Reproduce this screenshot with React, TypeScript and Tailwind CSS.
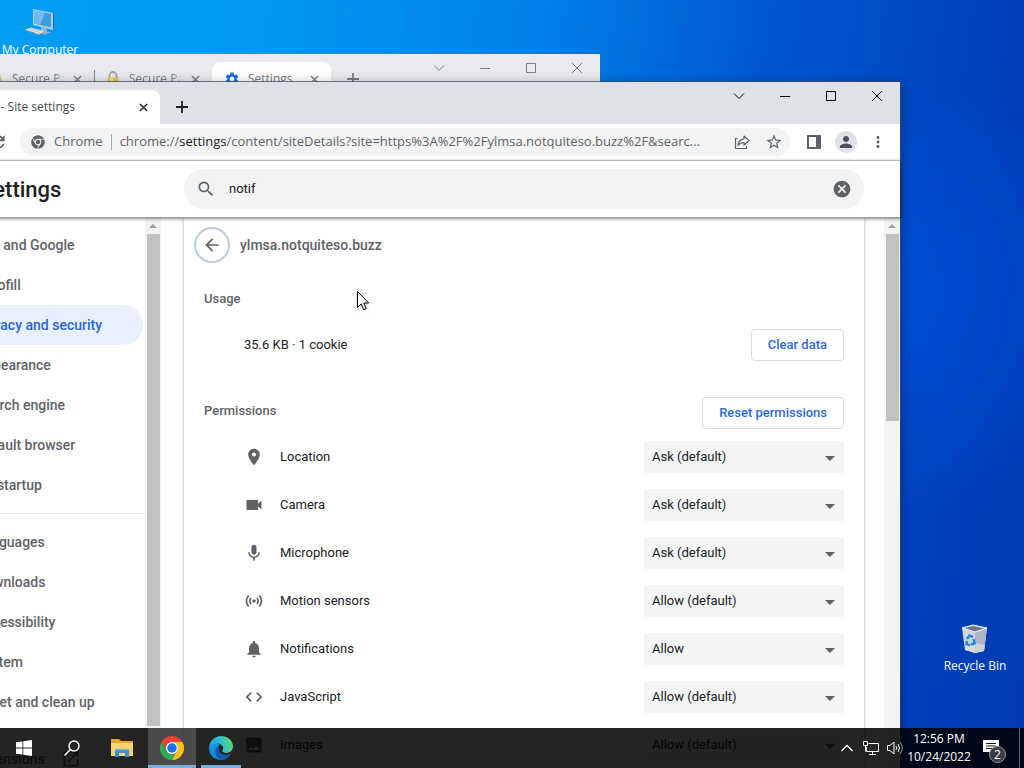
import { useState } from "react";
import {
  MdArrowBack,
  MdArrowDropDown,
  MdArrowForward,
  MdCancel,
  MdCode,
  MdImage,
  MdLocationOn,
  MdMic,
  MdMoreVert,
  MdNotifications,
  MdOpenInNew,
  MdPerson,
  MdRefresh,
  MdSearch,
  MdSensors,
  MdSettings,
  MdStarBorder,
  MdVideocam,
} from "react-icons/md";
import { FaChrome } from "react-icons/fa";

const menuTop = [
  "You and Google",
  "Autofill",
  "Privacy and security",
  "Appearance",
  "Search engine",
  "Default browser",
  "On startup",
];

const menuAdvanced = [
  "Languages",
  "Downloads",
  "Accessibility",
  "System",
  "Reset and clean up",
];

const permissions = [
  { name: "Location", icon: MdLocationOn, value: "Ask (default)" },
  { name: "Camera", icon: MdVideocam, value: "Ask (default)" },
  { name: "Microphone", icon: MdMic, value: "Ask (default)" },
  { name: "Motion sensors", icon: MdSensors, value: "Allow (default)" },
  { name: "Notifications", icon: MdNotifications, value: "Allow" },
  { name: "JavaScript", icon: MdCode, value: "Allow (default)" },
  { name: "Images", icon: MdImage, value: "Allow (default)" },
];

function CloseIcon() {
  return (
    <svg viewBox="0 0 10 10" className="size-[9px] shrink-0" fill="none" stroke="currentColor" strokeWidth="1.6">
      <path d="M1 1l8 8M9 1L1 9" />
    </svg>
  );
}

function PlusIcon() {
  return (
    <svg viewBox="0 0 12 12" className="size-3" fill="none" stroke="currentColor" strokeWidth="1.8">
      <path d="M6 0v12M0 6h12" />
    </svg>
  );
}

function LockIcon() {
  return (
    <svg viewBox="0 0 16 16" className="size-4 shrink-0">
      <path d="M4.500 9V5a3.500 4 0 0 1 7 0v4" fill="none" stroke="#aaa79c" strokeWidth="1.800" />
      <rect x="2.500" y="6.500" width="11" height="9" rx="2" fill="#e2c650" />
      <path d="M5 7h3v8H5z" fill="#f6e59a" />
    </svg>
  );
}

function WindowControls() {
  return (
    <div className="ml-auto flex h-7">
      <button aria-label="Search tabs" className="grid w-[46px] place-items-center">
        <svg viewBox="0 0 12 12" className="size-3" fill="none" stroke="currentColor">
          <path d="M1 3.500l5 5 5-5" />
        </svg>
      </button>
      <button aria-label="Minimize" className="grid w-[46px] place-items-center">
        <svg viewBox="0 0 10 10" className="size-[10px]" stroke="currentColor">
          <path d="M0 5.500h10" />
        </svg>
      </button>
      <button aria-label="Maximize" className="grid w-[46px] place-items-center">
        <svg viewBox="0 0 10 10" className="size-[10px]" fill="none" stroke="currentColor">
          <path d="M.5.5h9v9h-9z" />
        </svg>
      </button>
      <button aria-label="Close" className="grid w-[46px] place-items-center">
        <svg viewBox="0 0 12 12" className="size-3" fill="none" stroke="currentColor">
          <path d="M1 1l10 10M11 1L1 11" />
        </svg>
      </button>
    </div>
  );
}

function BackWindow() {
  return (
    <div className="absolute top-[54px] right-[424px] -left-6 h-96 bg-[#e8eaed] font-['Open_Sans',sans-serif] text-xs text-[#7a7d81]">
      <div className="flex h-[42px]">
        <div className="mt-2 flex h-[34px] w-[118px] items-center gap-2 px-3">
          <LockIcon />
          <span className="w-[54px] overflow-hidden whitespace-nowrap [mask-image:linear-gradient(to_right,black_80%,transparent)]">
            Secure Page
          </span>
          <button aria-label="Close tab" className="ml-auto">
            <CloseIcon />
          </button>
        </div>
        <div className="mt-4 h-5 w-px bg-[#85888c]" />
        <div className="mt-2 flex h-[34px] w-[117px] items-center gap-2 pr-3 pl-[10px]">
          <LockIcon />
          <span className="w-[54px] overflow-hidden whitespace-nowrap [mask-image:linear-gradient(to_right,black_80%,transparent)]">
            Secure Page
          </span>
          <button aria-label="Close tab" className="ml-auto">
            <CloseIcon />
          </button>
        </div>
        <div className="mt-2 flex h-[34px] w-[119px] items-center gap-2 rounded-t-lg bg-white px-3">
          <MdSettings className="size-4 text-[#1a6be0]" />
          <span>Settings</span>
          <button aria-label="Close tab" className="ml-auto">
            <CloseIcon />
          </button>
        </div>
        <button aria-label="New tab" className="mt-2 ml-4 h-[34px]">
          <PlusIcon />
        </button>
        <WindowControls />
      </div>
    </div>
  );
}

function Toolbar() {
  return (
    <div className="flex h-[37px] shrink-0 items-center border-b border-[#dcdee1] bg-white pr-[6px] pl-2 text-[#5f6368]">
      <button aria-label="Back" className="grid size-7 place-items-center">
        <MdArrowBack className="size-[18px]" />
      </button>
      <button aria-label="Forward" className="grid size-7 place-items-center">
        <MdArrowForward className="size-[18px]" />
      </button>
      <button aria-label="Reload" className="grid size-7 place-items-center">
        <MdRefresh className="size-5" />
      </button>
      <div className="ml-2 flex h-7 min-w-0 flex-1 items-center rounded-full bg-[#f1f3f4] pl-[11px] font-['Open_Sans',sans-serif] text-[13px]">
        <FaChrome className="size-[14px] shrink-0" />
        <span className="ml-[9px]">Chrome</span>
        <span className="mx-2 h-4 w-px bg-[#a5a8ac]" />
        <span className="min-w-0 flex-1 truncate">
          chrome://<span className="text-[#202124]">settings</span>
          /content/siteDetails?site=https%3A%2F%2Fylmsa.notquiteso.buzz%2F&searc...
        </span>
        <button aria-label="Share" className="ml-2 grid size-8 place-items-center">
          <svg viewBox="0 0 16 16" className="size-4" fill="none" stroke="currentColor" strokeWidth="1.200">
            <path d="M3.500 4.500H1.500v10h11V12" />
            <path d="M10 2l5 4.500-5 4.500V8.500c-3 0-4.500.8-6 3 .3-3.800 2.500-6.200 6-6.700z" strokeLinejoin="round" />
          </svg>
        </button>
        <button aria-label="Bookmark" className="grid size-8 place-items-center">
          <MdStarBorder className="size-[18px]" />
        </button>
      </div>
      <button aria-label="Side panel" className="ml-2 grid size-8 place-items-center">
        <svg viewBox="0 0 14 14" className="size-[14px]">
          <path d="M0 0h14v14H0zM2 2v10h7V2z" fill="currentColor" fillRule="evenodd" />
        </svg>
      </button>
      <button aria-label="Profile" className="grid size-8 place-items-center">
        <span className="grid size-[22px] place-items-center rounded-full bg-[#dee1e6]">
          <MdPerson className="size-[18px] text-[#4a4f5c]" />
        </span>
      </button>
      <button aria-label="Menu" className="grid size-8 place-items-center">
        <MdMoreVert className="size-[18px]" />
      </button>
    </div>
  );
}

function Scrollbar({ thumb }: { thumb: string }) {
  return (
    <div className="flex w-4 shrink-0 flex-col items-center bg-[#f3f3f3]">
      <svg viewBox="0 0 8 4" className="mt-[7px] mb-[6px] h-1 w-2 shrink-0">
        <path d="M4 0l4 4H0z" fill="#a0a0a0" />
      </svg>
      <div className={`w-[13px] bg-[#c1c1c1] ${thumb}`} />
    </div>
  );
}

function Sidebar() {
  return (
    <div className="flex w-[241px] shrink-0">
      <nav className="min-w-0 flex-1 pt-2 text-sm font-medium text-[#5f6368]">
        {menuTop.map((item) => (
          <a
            key={item}
            href="#"
            className={
              item === "Privacy and security"
                ? "mr-[2px] flex h-10 items-center rounded-r-full bg-[#e8f0fe] pl-14 text-[#2a67cf]"
                : "flex h-10 items-center pl-14"
            }
          >
            {item}
          </a>
        ))}
        <hr className="my-2 border-[#e8eaed]" />
        {menuAdvanced.map((item) => (
          <a key={item} href="#" className="flex h-10 items-center pl-14">
            {item}
          </a>
        ))}
        <hr className="my-2 border-[#e8eaed]" />
        <a href="#" className="flex h-10 items-center pl-14">
          Extensions
          <MdOpenInNew className="mr-16 ml-auto size-5" />
        </a>
      </nav>
      <Scrollbar thumb="mb-[42px] flex-1" />
    </div>
  );
}

function SiteDetails() {
  return (
    <div className="mr-5 min-w-0 flex-1 bg-white pr-5 pl-[10px] text-[13px] text-[#202124] shadow-[0_0_3px_rgba(60,64,67,0.45)]">
      <div className="flex h-14 items-center gap-[10px]">
        <button
          aria-label="Back"
          className="grid size-9 place-items-center rounded-full border-2 border-[#b9cfdf] text-[#5f6368]"
        >
          <MdArrowBack className="size-5" />
        </button>
        <h2 className="text-sm font-medium text-[#5f6368]">ylmsa.notquiteso.buzz</h2>
      </div>
      <h3 className="flex h-13 items-center pl-[10px] font-medium text-[#5f6368]">Usage</h3>
      <div className="flex h-10 items-center justify-between pl-[50px]">
        <span>35.6 KB · 1 cookie</span>
        <button className="h-8 rounded border border-[#dadce0] px-4 font-medium text-[#2f6ad9]">Clear data</button>
      </div>
      <div className="mt-7 flex h-10 items-center justify-between pl-[10px]">
        <h3 className="pb-1 font-medium text-[#5f6368]">Permissions</h3>
        <button className="h-8 rounded border border-[#dadce0] px-4 font-medium text-[#2f6ad9]">
          Reset permissions
        </button>
      </div>
      {permissions.map(({ name, icon: Icon, value }) => (
        <div key={name} className="flex h-12 items-center pl-[50px]">
          <Icon className="size-5 text-[#5f6368]" />
          <label htmlFor={name} className="ml-4 flex-1">
            {name}
          </label>
          <div className="relative w-[200px]">
            <select
              id={name}
              defaultValue={value}
              className="h-8 w-full appearance-none rounded-xs bg-[#f2f4f5] pr-7 pl-2"
            >
              <option>{value}</option>
              <option>Block</option>
            </select>
            <MdArrowDropDown className="pointer-events-none absolute top-[5px] right-[2px] size-6 text-[#5f6368]" />
          </div>
        </div>
      ))}
    </div>
  );
}

function FrontWindow() {
  const [query, setQuery] = useState("notif");

  return (
    <div className="absolute top-[82px] right-[124px] bottom-0 -left-20 flex flex-col bg-[#dee1e6] shadow-[0_0_0_1px_rgba(60,70,85,0.7),0_2px_12px_rgba(0,0,0,0.35)]">
      <div className="flex h-[42px] shrink-0 font-['Open_Sans',sans-serif] text-xs text-[#45494d]">
        <div className="mt-2 flex h-[34px] w-60 items-center rounded-tr-lg bg-white px-3">
          <MdSettings className="size-4 text-[#1a6be0]" />
          <span className="ml-[5px]">Settings - Site settings</span>
          <button aria-label="Close tab" className="ml-auto text-[#202124]">
            <CloseIcon />
          </button>
        </div>
        <button aria-label="New tab" className="mt-2 ml-4 h-[34px] text-[#202124]">
          <PlusIcon />
        </button>
        <div className="ml-auto text-black">
          <WindowControls />
        </div>
      </div>
      <Toolbar />
      <div className="flex min-h-0 flex-1 flex-col bg-white font-[Roboto,sans-serif]">
        <header className="z-10 flex h-14 shrink-0 items-center bg-white pr-9 shadow-[0_1px_3px_1px_rgba(0,0,0,0.45)]">
          <h1 className="w-[264px] pl-[60px] text-[22px] font-medium text-[#202124]">Settings</h1>
          <div className="flex h-10 flex-1 items-center rounded-full bg-[#f1f3f4] px-3 text-[#5f6368]">
            <MdSearch className="size-5" />
            <input
              aria-label="Search settings"
              value={query}
              onChange={(e) => setQuery(e.target.value)}
              className="ml-[13px] min-w-0 flex-1 bg-transparent text-[13px] text-[#202124] outline-none"
            />
            <button aria-label="Clear search" onClick={() => setQuery("")}>
              <MdCancel className="size-5" />
            </button>
          </div>
        </header>
        <div className="flex min-h-0 flex-1 overflow-hidden">
          <Sidebar />
          <main className="flex min-w-0 flex-1 bg-[#fdfdfd] pl-[23px]">
            <SiteDetails />
            <Scrollbar thumb="h-[187px]" />
          </main>
        </div>
      </div>
    </div>
  );
}

function ComputerIcon() {
  return (
    <svg viewBox="0 0 32 30" className="h-[30px] w-8">
      <path d="M9 1l20 4v17L9 17z" fill="#a5cfe2" />
      <path d="M10 2.500l17 3.500v13.500L10 15.500z" fill="#3f9be0" />
      <path d="M10 2.500l11 2.200-5 12.200-6-1.400z" fill="#6dbcf0" />
      <path d="M29 5l1 1v15l-1 1z" fill="#46627a" />
      <path d="M17 19l6 1.500v3l4 1-6 2-7-2 3-1.500z" fill="#9bb3c0" />
      <path d="M1 21.500l6-2 13 3.500-5 3.500z" fill="#dfe8ed" />
      <path d="M1 21.500l14 5v1L1 22.500z" fill="#8497a3" />
      <path d="M4 21l12 3.600M7 20.200l11 3" stroke="#a9b8c2" strokeWidth=".7" />
    </svg>
  );
}

function RecycleBinIcon() {
  return (
    <svg viewBox="0 0 28 30" className="h-[30px] w-7">
      <path d="M1 4l11-3 14 3-3 23-9 2-10-3z" fill="#ccd4dc" />
      <path d="M3 4l9-2 12 2.500L14 8z" fill="#66768a" />
      <path d="M14 8l12-4-3 23-9 2z" fill="#aab5c1" />
      <path d="M4 22l10-3 10 2-1 6-9 2-10-3z" fill="#dcdcdc" opacity=".7" />
      <path d="M1 4l11-3 14 3-12 4z" fill="none" stroke="#edf2f6" />
      <g fill="none" stroke="#1e86dc" strokeWidth="2.400">
        <path d="M6 15l2.500-3.500L12 13" />
        <path d="M12.500 15l1 4.500-3.500 1" />
        <path d="M9 21.500l-3.500-1.500.5-3" />
      </g>
    </svg>
  );
}

function WindowsLogo() {
  return (
    <svg viewBox="0 0 16 16" className="size-4" fill="white">
      <path d="M0 2.300l6.500-.9v6.200H0zM7.300 1.300L16 0v7.600H7.300zM0 8.400h6.500v6.200L0 13.700zM7.300 8.400H16V16l-8.700-1.300z" />
    </svg>
  );
}

function FolderIcon() {
  return (
    <svg viewBox="0 0 22 18" className="h-[18px] w-[22px]">
      <path d="M0 0h8l2 2h12v15H0z" fill="#e5a82f" />
      <path d="M0 4h22v13H0z" fill="#fbd46d" />
      <path d="M4 18v-8h14v8h-4v-4H8v4z" fill="#3f8fca" />
      <path d="M4 10h14v1.500H4z" fill="#66b2e2" />
    </svg>
  );
}

function ChromeLogo() {
  return (
    <svg viewBox="0 0 48 48" className="size-6">
      <path d="M24 24l10.400 6L24 48A24 24 0 0 1 3.200 12l10.400 18z" fill="#34a853" />
      <path d="M3.200 12A24 24 0 0 1 44.800 12H24a12 12 0 0 0-10.400 18z" fill="#ea4335" />
      <path d="M44.800 12A24 24 0 0 1 24 48l10.400-18A12 12 0 0 0 24 12z" fill="#fbc116" />
      <circle cx="24" cy="24" r="12" fill="white" />
      <circle cx="24" cy="24" r="9.500" fill="#1a73e8" />
    </svg>
  );
}

function EdgeLogo() {
  return (
    <svg viewBox="0 0 256 256" className="size-6">
      <defs>
        <linearGradient id="edgeTop" x1="0" y1="0.6" x2="1" y2="0.4">
          <stop offset="0" stopColor="#219fe6" />
          <stop offset=".5" stopColor="#2fbccb" />
          <stop offset="1" stopColor="#62da74" />
        </linearGradient>
        <linearGradient id="edgeSide" x1="0" y1="0" x2="0.7" y2="1">
          <stop offset="0" stopColor="#1b9de2" />
          <stop offset="1" stopColor="#1278cf" />
        </linearGradient>
      </defs>
      <path d="M1 126C-3 200 52 256 126 256c48 0 84-28 104-64-60 28-130 0-130-56 0-20 6-34 16-44C70 50 14 80 1 126z" fill="url(#edgeSide)" />
      <path d="M116 92c-30 14-50 40-49 75 1 40 30 75 66 85 42-4 76-28 97-60-60 28-130 0-130-56 0-20 6-34 16-44z" fill="#1259a8" />
      <path
        d="M1 126C4 54 59 0 128 0c71 0 128 51 128 110 0 39-29 70-66 70-29 0-49-11-49-21 0-5 10-10 10-28 0-27-27-55-65-55C48 76 16 98 1 126z"
        fill="url(#edgeTop)"
      />
    </svg>
  );
}

function Taskbar() {
  return (
    <footer className="absolute inset-x-0 bottom-0 flex h-10 bg-black/86 font-['Open_Sans',sans-serif] text-xs text-white">
      <button aria-label="Start" className="grid w-12 place-items-center">
        <WindowsLogo />
      </button>
      <button aria-label="Search" className="grid w-12 place-items-center">
        <svg viewBox="0 0 16 16" className="size-4" fill="none" stroke="white" strokeWidth="1.400">
          <circle cx="10" cy="6" r="5" />
          <path d="M6.400 9.600L.5 15.500" />
        </svg>
      </button>
      <button aria-label="File Explorer" className="grid w-[52px] place-items-center">
        <FolderIcon />
      </button>
      <button aria-label="Google Chrome" className="grid w-12 place-items-center border-b-3 border-[#76b0e3] bg-white/18 pt-[3px]">
        <ChromeLogo />
      </button>
      <button aria-label="Microsoft Edge" className="ml-[5px] grid w-10 place-items-center border-b-3 border-[#76b0e3] pt-[3px]">
        <EdgeLogo />
      </button>
      <div className="ml-auto flex items-center">
        <button aria-label="Show hidden icons" className="grid w-6 place-items-center">
          <svg viewBox="0 0 12 8" className="h-2 w-3" fill="none" stroke="white" strokeWidth="1.300">
            <path d="M.5 7L6 1.500 11.500 7" />
          </svg>
        </button>
        <button aria-label="Network" className="grid w-6 place-items-center">
          <svg viewBox="0 0 16 14" className="h-[14px] w-4" fill="none" stroke="white">
            <path d="M5.500 2.500h10v8h-12V6M9.500 10.500v3M6 13.500h7" />
            <path d="M.5.500h4v4h-4zM2.500 4.500v6" />
          </svg>
        </button>
        <button aria-label="Volume" className="grid w-6 place-items-center">
          <svg viewBox="0 0 16 14" className="h-[14px] w-4" fill="none" stroke="white">
            <path d="M.5 4.500H3L7 1v12L3 9.500H.5z" />
            <path d="M9 5q1.500 2 0 4M11 3q3 4 0 8" />
            <path d="M13 1q4.500 6 0 12" opacity=".6" />
          </svg>
        </button>
        <time className="w-16 text-center leading-[18px]">
          12:56 PM
          <br />
          10/24/2022
        </time>
        <button aria-label="2 new notifications" className="relative ml-[2px] grid h-10 w-9 place-items-center">
          <svg viewBox="0 0 16 16" className="size-4">
            <path d="M0 0h16v12h-5l-3 3v-3H0z" fill="white" />
            <path d="M3 3.500h10M3 6h10M3 8.500h7" stroke="#151515" />
          </svg>
          <span className="absolute top-[18px] left-4 grid size-[17px] place-items-center rounded-full border border-[#8d9096] bg-[#3a3d44] text-xs leading-3">
            2
          </span>
        </button>
        <div className="ml-[10px] h-10 w-px bg-[#5c6478]" />
        <div className="w-1" />
      </div>
    </footer>
  );
}

export default function App() {
  return (
    <div className="relative h-screen overflow-hidden bg-[radial-gradient(circle_at_86%_38%,#004dd6_0%,rgba(0,72,205,0)_22%),linear-gradient(98deg,#009df5_0%,#0098f2_24%,#0080e8_48%,#0058d0_68%,#0043bd_86%,#003ab4_100%)]">
      <div className="absolute top-2 left-0 flex w-20 flex-col items-center gap-1 font-['Open_Sans',sans-serif] text-xs text-white">
        <ComputerIcon />
        <span className="whitespace-nowrap">My Computer</span>
      </div>
      <div className="absolute right-[9px] bottom-[94px] flex w-20 flex-col items-center gap-1 font-['Open_Sans',sans-serif] text-xs text-white">
        <RecycleBinIcon />
        <span className="whitespace-nowrap">Recycle Bin</span>
      </div>
      <BackWindow />
      <FrontWindow />
      <svg viewBox="0 0 12 20" className="pointer-events-none absolute top-[291px] left-[357px] h-5 w-3 drop-shadow">
        <path d="M.5.5v16l3.700-3.500 2.500 5.700 2.600-1.100L6.900 12h4.800z" fill="white" stroke="black" />
      </svg>
      <Taskbar />
    </div>
  );
}
